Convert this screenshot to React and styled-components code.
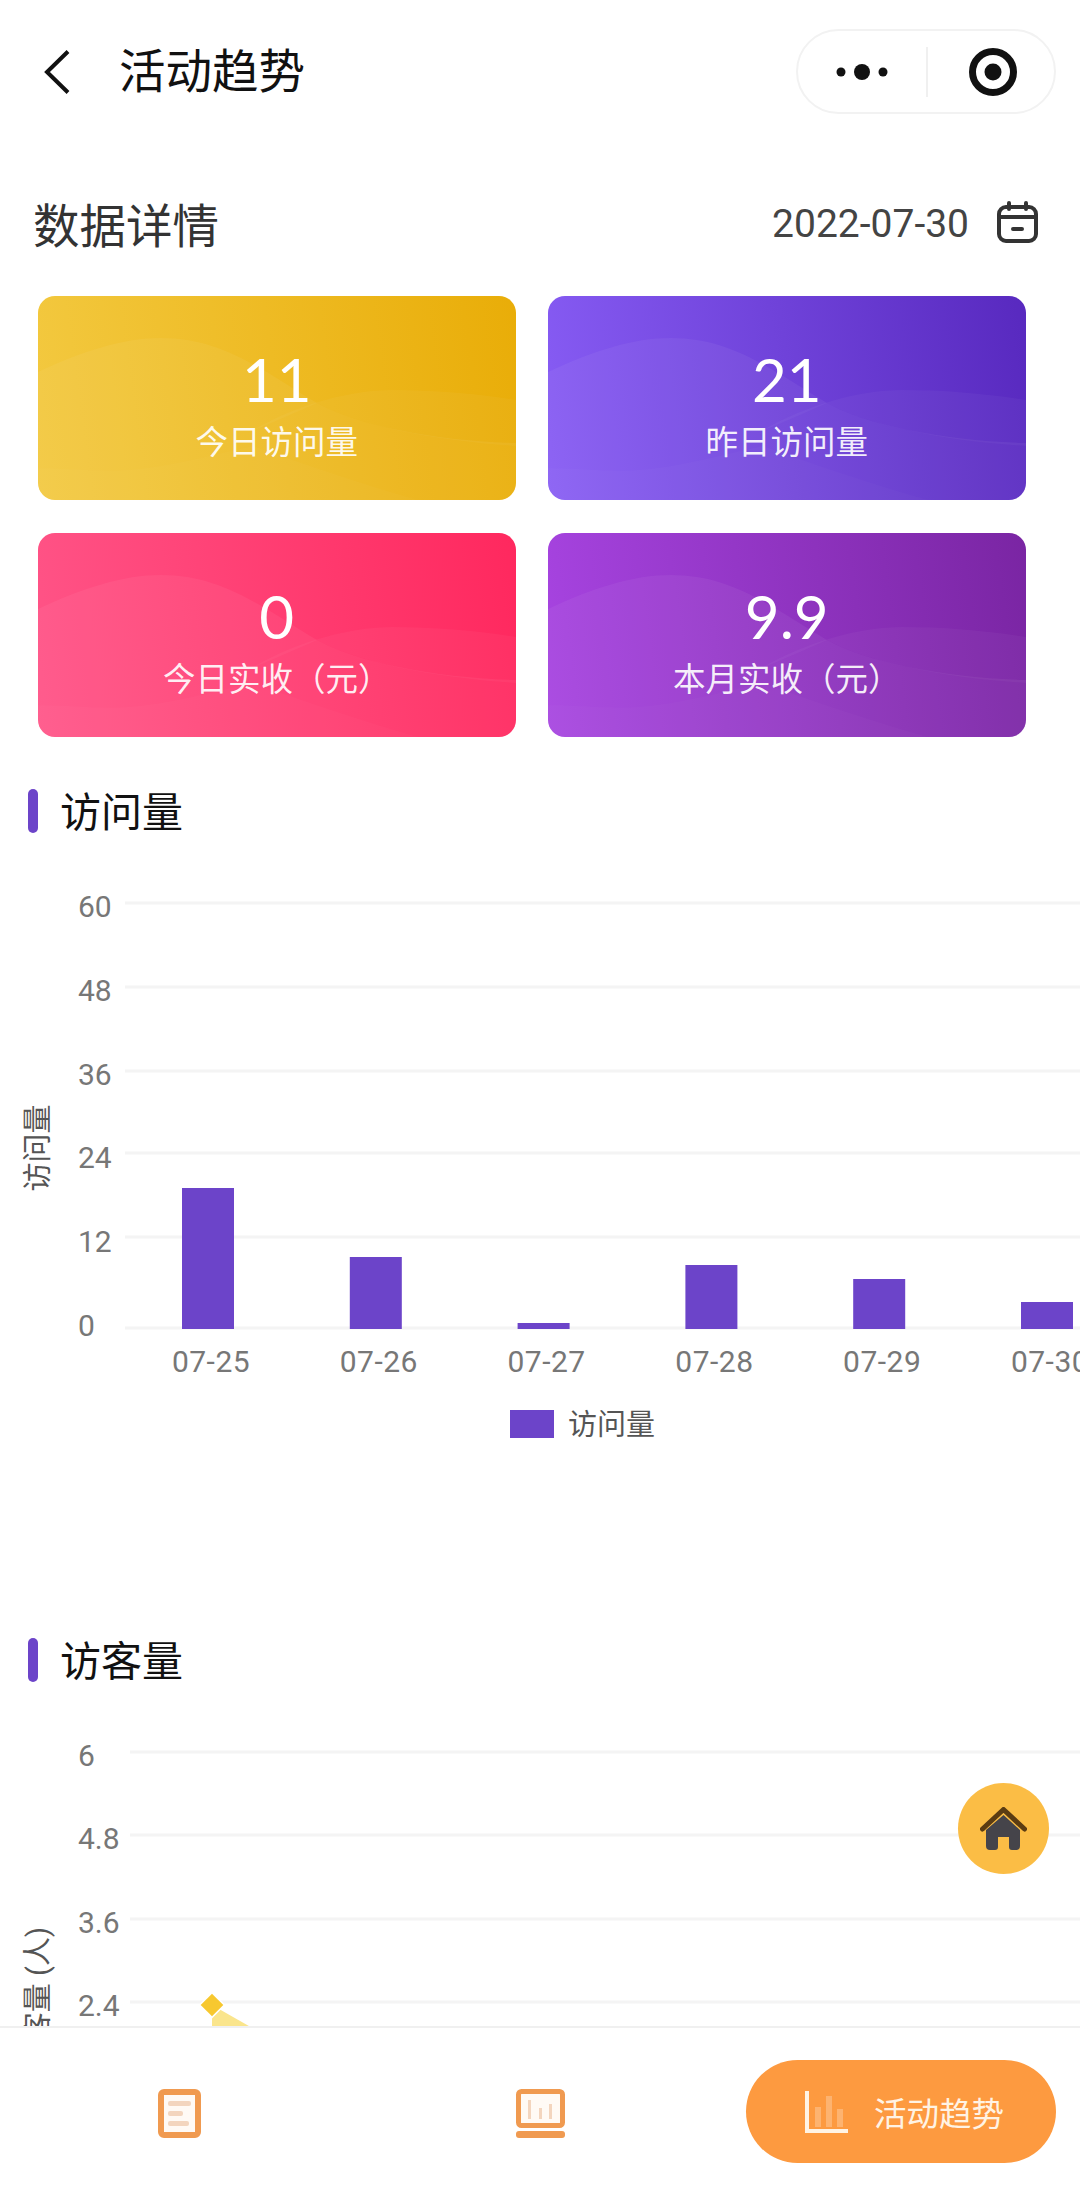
import React from "react";
import styled, { createGlobalStyle } from "styled-components";

const Global = createGlobalStyle`
  html, body { margin: 0; padding: 0; background: #fff; }
  body { font-family: Roboto, "Noto Sans CJK SC", sans-serif; }
  * { box-sizing: border-box; }
`;

const Page = styled.div`
  position: relative;
  width: 1080px;
  height: 2192px;
  display: flex;
  flex-direction: column;
  overflow: hidden;
  background: #fff;
`;
const Content = styled.main`
  flex: 1;
  min-height: 0;
  overflow: hidden;
`;
const NavBar = styled.header`
  height: 143px;
  display: flex;
  align-items: center;
  padding: 0 24px 0 44px;
`;
const NavTitle = styled.h1`
  margin: 0 0 0 49px;
  flex: 1;
  font-size: 46.5px;
  font-weight: 400;
  color: #111;
  line-height: 60px;
`;
const Capsule = styled.div`
  width: 260px;
  height: 85px;
  padding-right: 0;
  border: 2px solid #f2f2f2;
  border-radius: 43px;
  display: grid;
  grid-template-columns: 128px 2px 1fr;
  align-items: center;
  justify-items: center;
`;
const CapsuleDivider = styled.span`
  width: 2px;
  height: 50px;
  background: #f0f0f0;
`;
const TargetSvg = styled.svg`
  margin-left: 4px;
`;
const DetailHead = styled.div`
  margin-top: 37px;
  height: 84px;
  padding: 0 42px 0 33px;
  display: flex;
  align-items: center;
`;
const DetailTitle = styled.h2`
  margin: 0;
  flex: 1;
  font-size: 46.5px;
  font-weight: 400;
  color: #333;
`;
const DateText = styled.span`
  font-size: 39px;
  color: #444;
  margin: 4px 28px 0 0;
`;
const CardGrid = styled.section`
  margin-top: 32px;
  padding-left: 38px;
  display: grid;
  grid-template-columns: 477.5px 477.5px;
  grid-auto-rows: 204px;
  gap: 33px 32.5px;
`;
const Card = styled.div`
  position: relative;
  overflow: hidden;
  border-radius: 17px;
  background: linear-gradient(82deg, ${(p) => p.$from}, ${(p) => p.$to});
  color: #fff;
  text-align: center;
  padding-top: 53px;
`;
const WaveLayer = styled.svg`
  position: absolute;
  inset: 0;
`;
const CardValue = styled.div`
  position: relative;
  font-family: Lato, Roboto, sans-serif;
  font-size: 60px;
  line-height: 60px;
`;
const CardLabel = styled.div`
  position: relative;
  margin-top: 11px;
  font-size: 32.5px;
  line-height: 46px;
  color: rgba(255, 255, 255, 0.92);
`;
const SectionHead = styled.div`
  margin-top: ${(p) => p.$top}px;
  height: 44px;
  padding-left: 28px;
  display: flex;
  align-items: center;
  gap: 22px;
`;
const SectionBar = styled.span`
  width: 10px;
  height: 44px;
  border-radius: 5px;
  background: #6c44c9;
`;
const SectionTitle = styled.h3`
  margin: 3px 0 0;
  font-size: 41px;
  font-weight: 400;
  color: #111;
  line-height: 44px;
`;
const ChartSvg = styled.svg`
  display: block;
  font-family: Roboto, "Noto Sans CJK SC", sans-serif;
`;
const TabBar = styled.nav`
  height: 166px;
  flex: none;
  border-top: 2px solid #f0f0f0;
  background: #fff;
  display: flex;
  align-items: center;
  padding: 0 24px 0 158px;
  position: relative;
`;
const TabIcon = styled.svg`
  flex: none;
  margin-right: ${(p) => p.$gap}px;
  margin-top: 6px;
`;
const ActiveTab = styled.div`
  width: 311px;
  height: 103px;
  margin-top: 3px;
  border-radius: 52px;
  background: #fd9a40;
  display: flex;
  align-items: center;
  padding-left: 59px;
  gap: 26px;
  color: #fff3e4;
  font-size: 32.5px;
`;
const HomeButton = styled.button`
  position: absolute;
  left: 958px;
  top: 1783px;
  width: 91px;
  height: 91px;
  padding: 0;
  border: 0;
  border-radius: 50%;
  background: #fbbd45;
  display: flex;
  align-items: center;
  justify-content: center;
`;

const Waves = () => (
  <WaveLayer width="478" height="204" viewBox="0 0 478 204">
    <path d="M0 76C45 55 85 42 123 42C185 42 225 75 279 107C320 130 400 145 478 147V204H0Z" fill="#fff" fillOpacity=".05" />
    <path d="M210 137C255 110 310 94 354 94C400 94 440 98 478 104V150C400 145 320 130 279 107C255 118 230 128 210 137Z" fill="#fff" fillOpacity=".035" />
    <path d="M0 172C30 172 60 176 90 174C130 171 170 160 215 150C270 170 330 190 380 204H0Z" fill="#fff" fillOpacity=".02" />
  </WaveLayer>
);

const cards = [
  { value: "11", label: "今日访问量", from: "#f3c940", to: "#e9ad08" },
  { value: "21", label: "昨日访问量", from: "#875cf4", to: "#5829bf" },
  { value: "0", label: "今日实收（元）", from: "#ff5487", to: "#ff285e" },
  { value: "9.9", label: "本月实收（元）", from: "#a744e1", to: "#7a25a3" },
];

const Grid = ({ ticks, x = 125 }) =>
  ticks.map((t) => (
    <g key={t.label}>
      <line x1={x} x2="1080" y1={t.y} y2={t.y} stroke="#f4f4f4" strokeWidth="3" />
      <text x="78" y={t.y + t.dy} dominantBaseline="central" fontSize="30" fill="#777">
        {t.label}
      </text>
    </g>
  ));

/* first chart: origin of the svg is page y=833 */
const barOffset = 833;
const barTicks = [
  { label: "60", y: 903, dy: 3 },
  { label: "48", y: 987, dy: 3 },
  { label: "36", y: 1071, dy: 3 },
  { label: "24", y: 1153, dy: 4 },
  { label: "12", y: 1237, dy: 4 },
  { label: "0", y: 1328, dy: -3 },
].map((t) => ({ ...t, y: t.y - barOffset }));
const bars = [
  { day: "07-25", top: 1188 },
  { day: "07-26", top: 1257 },
  { day: "07-27", top: 1323 },
  { day: "07-28", top: 1265 },
  { day: "07-29", top: 1279 },
  { day: "07-30", top: 1302 },
];

const BarChart = () => (
  <ChartSvg width="1080" height="760" viewBox="0 0 1080 760">
    <Grid ticks={barTicks} />
    <text
      transform={`translate(38 ${1148 - barOffset}) rotate(-90)`}
      textAnchor="middle"
      dominantBaseline="central"
      fontSize="29"
      fill="#555"
    >
      访问量
    </text>
    {bars.map((b, i) => (
      <g key={b.day}>
        <rect x={182 + i * 167.8} y={b.top - barOffset} width="52" height={1329 - b.top} fill="#6c44c9" />
        <text
          x={211 + i * 167.8}
          y={1361 - barOffset}
          textAnchor="middle"
          dominantBaseline="central"
          fontSize="30"
          letterSpacing=".5"
          fill="#777"
        >
          {b.day}
        </text>
      </g>
    ))}
    <rect x="510" y={1410 - barOffset} width="44" height="28" fill="#6c44c9" />
    <text x="568" y={1425 - barOffset} dominantBaseline="central" fontSize="29" fill="#555">
      访问量
    </text>
  </ChartSvg>
);

const lineOffset = 1682;
const lineTicks = [
  { label: "6", y: 1752, dy: 3 },
  { label: "4.8", y: 1835, dy: 3 },
  { label: "3.6", y: 1919, dy: 3 },
  { label: "2.4", y: 2002, dy: 3 },
].map((t) => ({ ...t, y: t.y - lineOffset }));

const LineChart = () => (
  <ChartSvg width="1080" height="344" viewBox="0 0 1080 344">
    <Grid ticks={lineTicks} x={130} />
    <text
      transform={`translate(38 ${1927 - lineOffset}) rotate(-90)`}
      textAnchor="end"
      dominantBaseline="central"
      fontSize="29"
      fill="#555"
    >
      访客量 (人)
    </text>
    <path d={`M212 ${2005 - lineOffset}L400 ${2112 - lineOffset}H212Z`} fill="#fae58c" />
    <rect
      x="204"
      y={1997 - lineOffset}
      width="16"
      height="16"
      fill="#f7c82f"
      stroke="#fff"
      strokeWidth="3"
      paintOrder="stroke"
      transform={`rotate(45 212 ${2005 - lineOffset})`}
    />
  </ChartSvg>
);

const Chevron = () => (
  <svg width="26" height="44" viewBox="0 0 26 44" fill="none">
    <path d="M24 1.5L3 22L24 42.5" stroke="#111" strokeWidth="4" />
  </svg>
);
const Dots = () => (
  <svg width="52" height="20" viewBox="0 0 52 20" fill="#111">
    <circle cx="5" cy="10" r="4.5" />
    <circle cx="26" cy="10" r="8" />
    <circle cx="47" cy="10" r="4.5" />
  </svg>
);
const Target = () => (
  <TargetSvg width="48" height="48" viewBox="0 0 48 48" fill="none">
    <circle cx="24" cy="24" r="20.5" stroke="#111" strokeWidth="7" />
    <circle cx="24" cy="24" r="8.5" fill="#111" />
  </TargetSvg>
);
const Calendar = () => (
  <svg width="41" height="42" viewBox="0 0 41 42" fill="none" stroke="#333" strokeWidth="4" strokeLinecap="round">
    <rect x="2" y="6" width="37" height="34" rx="7" />
    <path d="M2 16H39M12 2V8M29 2V8M16 28H25" />
  </svg>
);
const House = () => (
  <svg width="47" height="43" viewBox="0 0 47 43">
    <path d="M2.5 22L23.5 2.5L44.5 22" fill="none" stroke="#5b3c12" strokeWidth="5" strokeLinecap="round" strokeLinejoin="round" />
    <path d="M23.5 8L40 23V39a4 4 0 0 1-4 4H32a3 3 0 0 1-3-3V30H18V40a3 3 0 0 1-3 3H10a4 4 0 0 1-4-4V23Z" fill="#45444a" />
  </svg>
);
const DocIcon = () => (
  <TabIcon $gap={315} width="43" height="49" viewBox="0 0 43 49">
    <rect x="3" y="3" width="37" height="43" rx="3" fill="#fffaf5" stroke="#f09a50" strokeWidth="6" />
    <rect x="10" y="12" width="23" height="5" rx="2" fill="#f3d5be" />
    <rect x="10" y="22" width="15" height="5" rx="2" fill="#f3d5be" />
    <rect x="10" y="32" width="21" height="5" rx="2" fill="#f3d5be" />
  </TabIcon>
);
const ScreenIcon = () => (
  <TabIcon $gap={181} width="49" height="49" viewBox="0 0 49 49">
    <rect x="2.5" y="2.5" width="44" height="34" rx="3" fill="#fffaf5" stroke="#f09a50" strokeWidth="5" />
    <rect x="12" y="11" width="3" height="19" fill="#f3d5be" />
    <rect x="23" y="19" width="3" height="11" fill="#f3d5be" />
    <rect x="33" y="15" width="3" height="15" fill="#f3d5be" />
    <rect x="0" y="42" width="49" height="7" rx="3" fill="#f09a50" />
  </TabIcon>
);
const StatsIcon = () => (
  <svg width="43" height="42" viewBox="0 0 43 42" fill="none">
    <rect x="10" y="16" width="6" height="20" fill="#fff" fillOpacity=".25" />
    <rect x="21" y="5" width="6" height="31" fill="#fff" fillOpacity=".25" />
    <rect x="32" y="18" width="6" height="18" fill="#fff" fillOpacity=".25" />
    <path d="M2 0V40H43" stroke="#fff3e4" strokeWidth="4" />
  </svg>
);

export default function App() {
  return (
    <Page>
      <Global />
      <Content>
        <NavBar>
          <Chevron />
          <NavTitle>活动趋势</NavTitle>
          <Capsule>
            <Dots />
            <CapsuleDivider />
            <Target />
          </Capsule>
        </NavBar>
        <DetailHead>
          <DetailTitle>数据详情</DetailTitle>
          <DateText>2022-07-30</DateText>
          <Calendar />
        </DetailHead>
        <CardGrid>
          {cards.map((c) => (
            <Card key={c.label} $from={c.from} $to={c.to}>
              <Waves />
              <CardValue>{c.value}</CardValue>
              <CardLabel>{c.label}</CardLabel>
            </Card>
          ))}
        </CardGrid>
        <SectionHead $top={52}>
          <SectionBar />
          <SectionTitle>访问量</SectionTitle>
        </SectionHead>
        <BarChart />
        <SectionHead $top={45}>
          <SectionBar />
          <SectionTitle>访客量</SectionTitle>
        </SectionHead>
        <LineChart />
      </Content>
      <TabBar>
        <DocIcon />
        <ScreenIcon />
        <ActiveTab>
          <StatsIcon />
          活动趋势
        </ActiveTab>
      </TabBar>
      <HomeButton aria-label="home">
        <House />
      </HomeButton>
    </Page>
  );
}
